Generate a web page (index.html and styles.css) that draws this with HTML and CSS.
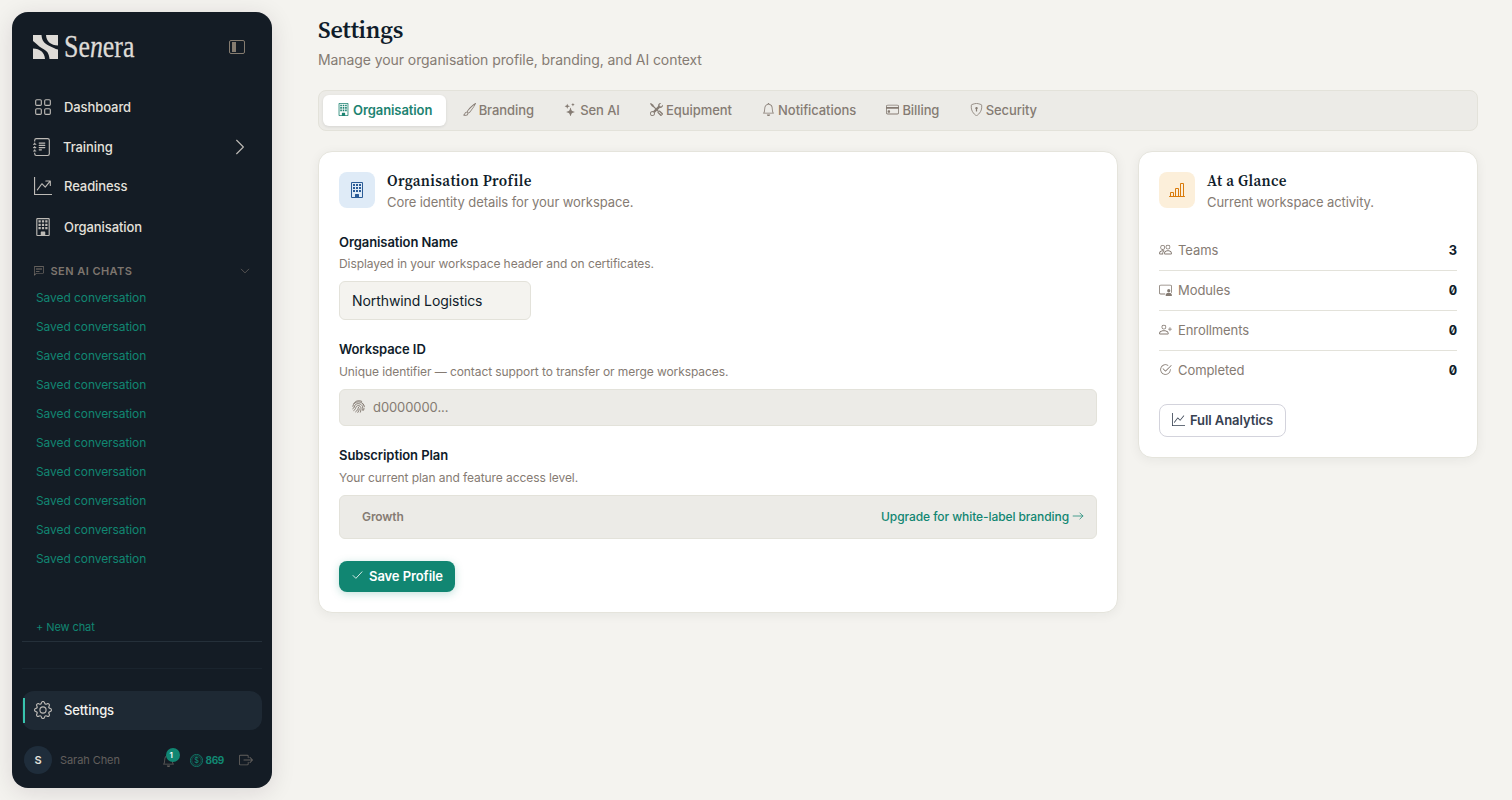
FILE: index.html
```html
<!DOCTYPE html>
<html lang="en">
  <head>
    <meta charset="UTF-8" />
    <meta name="viewport" content="width=device-width, initial-scale=1" />
    <title>Settings - Senera</title>
    <link rel="stylesheet" href="styles.css">
  </head>
  <body>
    <!-- Icon sprite -->
    <svg class="sprite" aria-hidden="true">
      <symbol id="i-building" viewBox="0 0 16 16">
        <path d="M4 2h2v2H4zM7 2h2v2H7zM10 2h2v2h-2zM4 5h2v2H4zM7 5h2v2H7zM10 5h2v2h-2zM4 8h2v2H4zM7 8h2v2H7zM10 8h2v2h-2z" />
        <path d="M2 1a1 1 0 0 1 1-1h10a1 1 0 0 1 1 1v14a1 1 0 0 1-1 1H3a1 1 0 0 1-1-1zm11 0H3v14h3v-2.5a.5.5 0 0 1 .5-.5h3a.5.5 0 0 1 .5.5V15h3z" />
      </symbol>
      <symbol id="i-grid" viewBox="0 0 16 16">
        <g fill="none" stroke="currentColor"><rect x="1.5" y="1.5" width="5" height="5" rx="1" /><rect x="9.5" y="1.5" width="5" height="5" rx="1" /><rect x="1.5" y="9.5" width="5" height="5" rx="1" /><rect x="9.5" y="9.5" width="5" height="5" rx="1" /></g>
      </symbol>
      <symbol id="i-journal" viewBox="0 0 16 16">
        <path d="M5 10.5a.5.5 0 0 1 .5-.5h2a.5.5 0 0 1 0 1h-2a.5.5 0 0 1-.5-.5m0-2a.5.5 0 0 1 .5-.5h5a.5.5 0 0 1 0 1h-5a.5.5 0 0 1-.5-.5m0-2a.5.5 0 0 1 .5-.5h5a.5.5 0 0 1 0 1h-5a.5.5 0 0 1-.5-.5m0-2a.5.5 0 0 1 .5-.5h5a.5.5 0 0 1 0 1h-5a.5.5 0 0 1-.5-.5" />
        <path d="M3 0h10a2 2 0 0 1 2 2v12a2 2 0 0 1-2 2H3a2 2 0 0 1-2-2v-1h1v1a1 1 0 0 0 1 1h10a1 1 0 0 0 1-1V2a1 1 0 0 0-1-1H3a1 1 0 0 0-1 1v1H1V2a2 2 0 0 1 2-2" />
        <path d="M1 5v-.5a.5.5 0 0 1 1 0V5h.5a.5.5 0 0 1 0 1h-2a.5.5 0 0 1 0-1zm0 3v-.5a.5.5 0 0 1 1 0V8h.5a.5.5 0 0 1 0 1h-2a.5.5 0 0 1 0-1zm0 3v-.5a.5.5 0 0 1 1 0v.5h.5a.5.5 0 0 1 0 1h-2a.5.5 0 0 1 0-1z" />
      </symbol>
      <symbol id="i-trend" viewBox="0 0 16 16">
        <path d="M0 0h1v15h15v1H0zm10 3.5a.5.5 0 0 1 .5-.5h4a.5.5 0 0 1 .5.5v4a.5.5 0 0 1-1 0V4.9l-3.613 4.417a.5.5 0 0 1-.74.037L7.06 6.767l-3.656 5.027a.5.5 0 0 1-.808-.588l4-5.5a.5.5 0 0 1 .758-.06l2.609 2.61L13.445 4H10.5a.5.5 0 0 1-.5-.5" />
      </symbol>
      <symbol id="i-graph" viewBox="0 0 16 16">
        <path d="M0 0h1v15h15v1H0zm14.817 3.113a.5.5 0 0 1 .07.704l-4.5 5.5a.5.5 0 0 1-.74.037L7.06 6.767l-3.656 5.027a.5.5 0 0 1-.808-.588l4-5.5a.5.5 0 0 1 .758-.06l2.609 2.61 4.15-5.073a.5.5 0 0 1 .704-.07" />
      </symbol>
      <symbol id="i-chat" viewBox="0 0 16 16">
        <path d="M14 1a1 1 0 0 1 1 1v8a1 1 0 0 1-1 1H4.414A2 2 0 0 0 3 11.586l-2 2V2a1 1 0 0 1 1-1zM2 0a2 2 0 0 0-2 2v12.793a.5.5 0 0 0 .854.353l2.853-2.853A1 1 0 0 1 4.414 12H14a2 2 0 0 0 2-2V2a2 2 0 0 0-2-2z" />
        <path d="M3 3.5a.5.5 0 0 1 .5-.5h9a.5.5 0 0 1 0 1h-9a.5.5 0 0 1-.5-.5M3 6a.5.5 0 0 1 .5-.5h9a.5.5 0 0 1 0 1h-9A.5.5 0 0 1 3 6m0 2.5a.5.5 0 0 1 .5-.5h5a.5.5 0 0 1 0 1h-5a.5.5 0 0 1-.5-.5" />
      </symbol>
      <symbol id="i-right" viewBox="0 0 16 16">
        <path d="M5 2l6 6-6 6" fill="none" stroke="currentColor" stroke-linecap="round" stroke-linejoin="round" />
      </symbol>
      <symbol id="i-down" viewBox="0 0 16 16">
        <path d="M2 5l6 6 6-6" fill="none" stroke="currentColor" stroke-linecap="round" stroke-linejoin="round" />
      </symbol>
      <symbol id="i-gear" viewBox="0 0 16 16">
        <path d="M8 4.754a3.246 3.246 0 1 0 0 6.492 3.246 3.246 0 0 0 0-6.492M5.754 8a2.246 2.246 0 1 1 4.492 0 2.246 2.246 0 0 1-4.492 0" />
        <path d="M9.796 1.343c-.527-1.79-3.065-1.79-3.592 0l-.094.319a.873.873 0 0 1-1.255.52l-.292-.16c-1.64-.892-3.433.902-2.54 2.541l.159.292a.873.873 0 0 1-.52 1.255l-.319.094c-1.79.527-1.79 3.065 0 3.592l.319.094a.873.873 0 0 1 .52 1.255l-.16.292c-.892 1.64.901 3.434 2.541 2.54l.292-.159a.873.873 0 0 1 1.255.52l.094.319c.527 1.79 3.065 1.79 3.592 0l.094-.319a.873.873 0 0 1 1.255-.52l.292.16c1.64.893 3.434-.902 2.54-2.541l-.159-.292a.873.873 0 0 1 .52-1.255l.319-.094c1.79-.527 1.79-3.065 0-3.592l-.319-.094a.873.873 0 0 1-.52-1.255l.16-.292c.893-1.64-.902-3.433-2.541-2.54l-.292.159a.873.873 0 0 1-1.255-.52zm-2.633.283c.246-.835 1.428-.835 1.674 0l.094.319a1.873 1.873 0 0 0 2.693 1.115l.291-.16c.764-.415 1.6.42 1.184 1.185l-.159.292a1.873 1.873 0 0 0 1.116 2.692l.318.094c.835.246.835 1.428 0 1.674l-.319.094a1.873 1.873 0 0 0-1.115 2.693l.16.291c.415.764-.42 1.6-1.185 1.184l-.291-.159a1.873 1.873 0 0 0-2.693 1.116l-.094.318c-.246.835-1.428.835-1.674 0l-.094-.319a1.873 1.873 0 0 0-2.692-1.115l-.292.16c-.764.415-1.6-.42-1.184-1.185l.159-.291A1.873 1.873 0 0 0 1.945 8.93l-.319-.094c-.835-.246-.835-1.428 0-1.674l.319-.094A1.873 1.873 0 0 0 3.06 4.377l-.16-.292c-.415-.764.42-1.6 1.185-1.184l.292.159a1.873 1.873 0 0 0 2.692-1.115z" />
      </symbol>
      <symbol id="i-bell" viewBox="0 0 16 16">
        <path d="M8 16a2 2 0 0 0 2-2H6a2 2 0 0 0 2 2M8 1.918l-.797.161A4 4 0 0 0 4 6c0 .628-.134 2.197-.459 3.742-.16.767-.376 1.566-.663 2.258h10.244c-.287-.692-.502-1.49-.663-2.258C12.134 8.197 12 6.628 12 6a4 4 0 0 0-3.203-3.92zM14.22 12c.223.447.481.801.78 1H1c.299-.199.557-.553.78-1C2.68 10.2 3 6.88 3 6c0-2.42 1.72-4.44 4.005-4.901a1 1 0 1 1 1.99 0A5 5 0 0 1 13 6c0 .88.32 4.2 1.22 6" />
      </symbol>
      <symbol id="i-coin" viewBox="0 0 16 16">
        <circle cx="8" cy="8" r="7.5" fill="none" stroke="currentColor" />
        <circle cx="8" cy="8" r="5.8" fill="none" stroke="currentColor" stroke-width=".6" />
        <text x="8" y="11.3" text-anchor="middle" font-size="9" font-weight="500">$</text>
      </symbol>
      <symbol id="i-logout" viewBox="0 0 16 16">
        <path d="M10 12.5a.5.5 0 0 1-.5.5h-8a.5.5 0 0 1-.5-.5v-9a.5.5 0 0 1 .5-.5h8a.5.5 0 0 1 .5.5v2a.5.5 0 0 0 1 0v-2A1.5 1.5 0 0 0 9.5 2h-8A1.5 1.5 0 0 0 0 3.5v9A1.5 1.5 0 0 0 1.5 14h8a1.5 1.5 0 0 0 1.5-1.5v-2a.5.5 0 0 0-1 0z" />
        <path d="M15.854 8.354a.5.5 0 0 0 0-.708l-3-3a.5.5 0 0 0-.708.708L14.293 7.5H5.5a.5.5 0 0 0 0 1h8.793l-2.147 2.146a.5.5 0 0 0 .708.708z" />
      </symbol>
      <symbol id="i-brush" viewBox="0 0 16 16">
        <path d="M15.825.12a.5.5 0 0 1 .132.584c-1.53 3.43-4.743 8.17-7.095 10.64a6.1 6.1 0 0 1-2.373 1.534c-.018.227-.06.538-.16.868-.201.659-.667 1.479-1.708 1.74a8.1 8.1 0 0 1-3.078.132 4 4 0 0 1-.562-.135 1.4 1.4 0 0 1-.466-.247.7.7 0 0 1-.204-.288.62.62 0 0 1 .004-.443c.095-.245.316-.38.461-.452.394-.197.625-.453.867-.826.095-.144.184-.297.287-.472l.117-.198c.151-.255.326-.54.546-.848.528-.739 1.201-.925 1.746-.896q.19.012.348.048c.062-.172.142-.38.238-.608.261-.619.658-1.419 1.187-2.069 2.176-2.67 6.18-6.206 9.117-8.104a.5.5 0 0 1 .596.04M4.705 11.912a1.2 1.2 0 0 0-.419-.1c-.246-.013-.573.05-.879.479-.197.275-.355.532-.5.777l-.105.177c-.106.181-.213.362-.32.528a3.4 3.4 0 0 1-.76.861c.69.112 1.736.111 2.657-.12.559-.139.843-.569.993-1.06a3 3 0 0 0 .126-.75zm1.44.026c.12-.04.277-.1.458-.183a5.1 5.1 0 0 0 1.535-1.1c1.9-1.996 4.412-5.57 6.052-8.631-2.59 1.927-5.566 4.66-7.302 6.792-.442.543-.795 1.243-1.042 1.826-.121.288-.214.54-.275.72v.001l.575.575z" />
      </symbol>
      <symbol id="i-stars" viewBox="0 0 16 16">
        <path d="M7.657 6.247c.11-.33.576-.33.686 0l.645 1.937a2.89 2.89 0 0 0 1.829 1.828l1.936.645c.33.11.33.576 0 .686l-1.937.645a2.89 2.89 0 0 0-1.828 1.829l-.645 1.936a.361.361 0 0 1-.686 0l-.645-1.937a2.89 2.89 0 0 0-1.828-1.828l-1.937-.645a.361.361 0 0 1 0-.686l1.937-.645a2.89 2.89 0 0 0 1.828-1.828zM3.794 1.148a.217.217 0 0 1 .412 0l.387 1.162c.173.518.579.924 1.097 1.097l1.162.387a.217.217 0 0 1 0 .412l-1.162.387A1.73 1.73 0 0 0 4.593 5.69l-.387 1.162a.217.217 0 0 1-.412 0L3.407 5.69A1.73 1.73 0 0 0 2.31 4.593l-1.162-.387a.217.217 0 0 1 0-.412l1.162-.387A1.73 1.73 0 0 0 3.407 2.31zM10.863.099a.145.145 0 0 1 .274 0l.258.774c.115.346.386.617.732.732l.774.258a.145.145 0 0 1 0 .274l-.774.258a1.16 1.16 0 0 0-.732.732l-.258.774a.145.145 0 0 1-.274 0l-.258-.774a1.16 1.16 0 0 0-.732-.732L9.1 2.137a.145.145 0 0 1 0-.274l.774-.258c.346-.115.617-.386.732-.732z" />
      </symbol>
      <symbol id="i-tools" viewBox="0 0 16 16">
        <path d="M1 0 0 1l2.2 3.081a1 1 0 0 0 .815.419h.07a1 1 0 0 1 .708.293l2.675 2.675-2.617 2.654A3.003 3.003 0 0 0 0 13a3 3 0 1 0 5.878-.851l2.654-2.617.968.968-.305.914a1 1 0 0 0 .242 1.023l3.27 3.27a.997.997 0 0 0 1.414 0l1.586-1.586a.997.997 0 0 0 0-1.414l-3.27-3.27a1 1 0 0 0-1.023-.242L10.5 9.5l-.96-.96 2.68-2.643A3.005 3.005 0 0 0 16 3q0-.405-.102-.777l-2.14 2.141L12 4l-.364-1.757L13.777.102a3 3 0 0 0-3.675 3.68L7.462 6.46 4.793 3.793a1 1 0 0 1-.293-.707v-.071a1 1 0 0 0-.419-.814zm9.646 10.646a.5.5 0 0 1 .708 0l2.914 2.915a.5.5 0 0 1-.707.707l-2.915-2.914a.5.5 0 0 1 0-.708M3 11l.471.242.529.026.287.445.445.287.026.529L5 13l-.242.471-.026.529-.445.287-.287.445-.529.026L3 15l-.471-.242L2 14.732l-.287-.445L1.268 14l-.026-.529L1 13l.242-.471.026-.529.445-.287.287-.445.529-.026z" />
      </symbol>
      <symbol id="i-card" viewBox="0 0 16 16">
        <path d="M0 4a2 2 0 0 1 2-2h12a2 2 0 0 1 2 2v8a2 2 0 0 1-2 2H2a2 2 0 0 1-2-2zm2-1a1 1 0 0 0-1 1v1h14V4a1 1 0 0 0-1-1zm13 4H1v5a1 1 0 0 0 1 1h12a1 1 0 0 0 1-1z" />
        <path d="M2 10a1 1 0 0 1 1-1h1a1 1 0 0 1 1 1v1a1 1 0 0 1-1 1H3a1 1 0 0 1-1-1z" />
      </symbol>
      <symbol id="i-shield" viewBox="0 0 16 16">
        <path d="M8 .5c-1.5 0-4.1.9-5.6 1.4a1 1 0 0 0-.75.9c-.6 4.6 1 7.6 2.6 9.6C5.5 14 7.2 15.5 8 15.5s2.5-1.5 3.75-3.1c1.6-2 3.2-5 2.6-9.6a1 1 0 0 0-.75-.9C12.1 1.4 9.5.5 8 .5z" fill="none" stroke="currentColor" />
        <path d="M9.5 6.5a1.5 1.5 0 0 1-1 1.415l.385 1.99a.5.5 0 0 1-.491.595h-.788a.5.5 0 0 1-.49-.595l.384-1.99a1.5 1.5 0 1 1 2-1.415" />
      </symbol>
      <symbol id="i-bars" viewBox="0 0 16 16">
        <path d="M11 2a1 1 0 0 1 1-1h2a1 1 0 0 1 1 1v12h.5a.5.5 0 0 1 0 1H.5a.5.5 0 0 1 0-1H1v-3a1 1 0 0 1 1-1h2a1 1 0 0 1 1 1v3h1V7a1 1 0 0 1 1-1h2a1 1 0 0 1 1 1v7h1zm1 12h2V2h-2zm-3 0V7H7v7zm-5 0v-3H2v3z" />
      </symbol>
      <symbol id="i-people" viewBox="0 0 16 16">
        <path d="M15 14s1 0 1-1-1-4-5-4-5 3-5 4 1 1 1 1zm-7.978-1L7 12.996c.001-.264.167-1.03.76-1.72C8.312 10.629 9.282 10 11 10c1.717 0 2.687.63 3.24 1.276.593.69.758 1.457.76 1.72l-.008.002-.014.002zM11 7a2 2 0 1 0 0-4 2 2 0 0 0 0 4m3-2a3 3 0 1 1-6 0 3 3 0 0 1 6 0M6.936 9.28a6 6 0 0 0-1.23-.247A7 7 0 0 0 5 9c-4 0-5 3-5 4q0 1 1 1h4.216A2.24 2.24 0 0 1 5 13c0-1.01.377-2.042 1.09-2.904.243-.294.526-.569.846-.816M4.92 10A5.5 5.5 0 0 0 4 13H1c0-.26.164-1.03.76-1.724.545-.636 1.492-1.256 3.16-1.275ZM1.5 5.5a3 3 0 1 1 6 0 3 3 0 0 1-6 0m3-2a2 2 0 1 0 0 4 2 2 0 0 0 0-4" />
      </symbol>
      <symbol id="i-video" viewBox="0 0 16 16">
        <path d="M14 9.5a2 2 0 1 1-4 0 2 2 0 0 1 4 0m-6 5.7c0 .8.8.8.8.8h6.4s.8 0 .8-.8-.8-3.2-4-3.2-4 2.4-4 3.2" />
        <path d="M2 2a2 2 0 0 0-2 2v8a2 2 0 0 0 2 2h5.243c.122-.326.295-.668.526-1H2a1 1 0 0 1-1-1V4a1 1 0 0 1 1-1h12a1 1 0 0 1 1 1v7.81c.353.23.656.496.91.783Q16 12.312 16 12V4a2 2 0 0 0-2-2z" />
      </symbol>
      <symbol id="i-plus" viewBox="0 0 16 16">
        <path d="M6 8a3 3 0 1 0 0-6 3 3 0 0 0 0 6m2-3a2 2 0 1 1-4 0 2 2 0 0 1 4 0m4 8c0 1-1 1-1 1H1s-1 0-1-1 1-4 6-4 6 3 6 4m-1-.004c-.001-.246-.154-.986-.832-1.664C9.516 10.68 8.289 10 6 10s-3.516.68-4.168 1.332c-.678.678-.83 1.418-.832 1.664z" />
        <path d="M13.5 5a.5.5 0 0 1 .5.5V7h1.5a.5.5 0 0 1 0 1H14v1.5a.5.5 0 0 1-1 0V8h-1.5a.5.5 0 0 1 0-1H13V5.5a.5.5 0 0 1 .5-.5" />
      </symbol>
      <symbol id="i-done" viewBox="0 0 16 16">
        <path d="M2.5 8a5.5 5.5 0 0 1 8.25-4.764.5.5 0 0 0 .5-.866A6.5 6.5 0 1 0 14.5 8a.5.5 0 0 0-1 0 5.5 5.5 0 1 1-11 0" />
        <path d="M15.354 3.354a.5.5 0 0 0-.708-.708L8 9.293 5.354 6.646a.5.5 0 1 0-.708.708l3 3a.5.5 0 0 0 .708 0z" />
      </symbol>
      <symbol id="i-check" viewBox="0 0 16 16">
        <path d="M2.5 8L6 11.5l7.500-8" fill="none" stroke="currentColor" stroke-linecap="round" stroke-linejoin="round" />
      </symbol>
      <symbol id="i-arrow" viewBox="0 0 16 16">
        <path d="M1.5 8h13M10.5 4l4 4-4 4" fill="none" stroke="currentColor" stroke-linecap="round" stroke-linejoin="round" />
      </symbol>
      <symbol id="i-finger" viewBox="0 0 16 16">
        <g fill="none" stroke="currentColor" stroke-width="1.2" stroke-linecap="round">
          <path d="M2.2 4.2C4.5.8 8.5-.1 12 1.7M1 7.8C1.2 4.5 4.5 2 8.5 2.3c3.5.3 6 2.5 6.7 6" />
          <path d="M1 10.8c2.5-1 1.5-3.3 3-4.9 2.5-2.5 7.5-1.6 8.9 2 .5 1.3.6 3 .3 4.700M2.2 13C5 11.5 4 9.5 5.5 7.8c1.7-1.7 4.5-1 5.3 1.2.5 1.7.3 4-.5 6M4.5 14.6C7 13 7.2 11 8 9M7.2 15.3C8.2 14 8.7 12.5 9 11M13 4.2l1.5 2M14.8 10.5l-.5 2" />
        </g>
      </symbol>
    </svg>

    <div class="app">
      <aside class="sidebar">
        <div class="brand">
          <div class="logo">
            <svg width="25" height="24" viewBox="0 3 25 24">
              <path d="M0 3h8.5C9 9 11 11 16 13.700c4 2 6 3 9 3.800V27h-8.500C16 21 14 18.700 9 16.200 5 14 3 11 0 9z" />
              <path d="M13 3h12v10.5C18 13 13.5 10 13 3zM0 16.5C7 17 11.500 20 12 27H0z" />
            </svg>
            <span class="wordmark">Se<i>n</i>era</span>
          </div>
          <button class="collapse" aria-label="Collapse sidebar"><span></span></button>
        </div>

        <nav class="nav">
          <a class="nav-item"><svg class="icon"><use href="#i-grid" /></svg>Dashboard</a>
          <a class="nav-item training"><svg class="icon"><use href="#i-journal" /></svg>Training<svg class="icon end"><use href="#i-right" /></svg></a>
          <a class="nav-item readiness"><svg class="icon"><use href="#i-trend" /></svg>Readiness</a>
          <a class="nav-item"><svg class="icon"><use href="#i-building" /></svg>Organisation</a>
        </nav>

        <div class="chats">
          <div class="chats-head">
            <svg class="icon"><use href="#i-chat" /></svg>SEN AI CHATS
            <svg class="icon end"><use href="#i-down" /></svg>
          </div>
          <a class="chat">Saved conversation</a>
          <a class="chat">Saved conversation</a>
          <a class="chat">Saved conversation</a>
          <a class="chat">Saved conversation</a>
          <a class="chat">Saved conversation</a>
          <a class="chat">Saved conversation</a>
          <a class="chat">Saved conversation</a>
          <a class="chat">Saved conversation</a>
          <a class="chat">Saved conversation</a>
          <a class="chat">Saved conversation</a>
        </div>
        <a class="new-chat">+ New chat</a>

        <div class="side-bottom">
          <a class="nav-item active"><svg class="icon"><use href="#i-gear" /></svg>Settings</a>
          <div class="user">
            <span class="avatar">S</span>
            <span class="user-name">Sarah Chen</span>
            <span class="bell"><svg class="icon"><use href="#i-bell" /></svg><span class="badge">1</span></span>
            <span class="credits"><svg class="icon"><use href="#i-coin" /></svg>869</span>
            <svg class="icon logout"><use href="#i-logout" /></svg>
          </div>
        </div>
      </aside>

      <main class="main">
        <h1>Settings</h1>
        <p class="subtitle">Manage your organisation profile, branding, and AI context</p>

        <div class="tabs">
          <a class="tab selected"><svg class="icon"><use href="#i-building" /></svg>Organisation</a>
          <a class="tab"><svg class="icon"><use href="#i-brush" /></svg>Branding</a>
          <a class="tab"><svg class="icon"><use href="#i-stars" /></svg>Sen AI</a>
          <a class="tab"><svg class="icon"><use href="#i-tools" /></svg>Equipment</a>
          <a class="tab"><svg class="icon"><use href="#i-bell" /></svg>Notifications</a>
          <a class="tab"><svg class="icon"><use href="#i-card" /></svg>Billing</a>
          <a class="tab"><svg class="icon"><use href="#i-shield" /></svg>Security</a>
        </div>

        <div class="columns">
          <section class="card">
            <div class="card-head">
              <span class="card-icon blue"><svg class="icon"><use href="#i-building" /></svg></span>
              <div>
                <h2>Organisation Profile</h2>
                <p>Core identity details for your workspace.</p>
              </div>
            </div>

            <div class="field">
              <label for="orgName">Organisation Name</label>
              <p class="hint">Displayed in your workspace header and on certificates.</p>
              <input type="text" id="orgName" value="Northwind Logistics" />
            </div>

            <div class="field">
              <label>Workspace ID</label>
              <p class="hint">Unique identifier — contact support to transfer or merge workspaces.</p>
              <div class="readonly"><svg class="icon"><use href="#i-finger" /></svg>d0000000...</div>
            </div>

            <div class="field">
              <label>Subscription Plan</label>
              <p class="hint">Your current plan and feature access level.</p>
              <div class="readonly plan">
                <span class="plan-name">Growth</span>
                <a class="upgrade">Upgrade for white-label branding <svg class="icon"><use href="#i-arrow" /></svg></a>
              </div>
            </div>

            <button class="save"><svg class="icon"><use href="#i-check" /></svg>Save Profile</button>
          </section>

          <section class="card glance">
            <div class="card-head">
              <span class="card-icon amber"><svg class="icon"><use href="#i-bars" /></svg></span>
              <div>
                <h2>At a Glance</h2>
                <p>Current workspace activity.</p>
              </div>
            </div>
            <div class="stat"><svg class="icon"><use href="#i-people" /></svg>Teams<strong>3</strong></div>
            <div class="stat"><svg class="icon"><use href="#i-video" /></svg>Modules<strong>0</strong></div>
            <div class="stat"><svg class="icon"><use href="#i-plus" /></svg>Enrollments<strong>0</strong></div>
            <div class="stat"><svg class="icon"><use href="#i-done" /></svg>Completed<strong>0</strong></div>
            <button class="analytics"><svg class="icon"><use href="#i-graph" /></svg>Full Analytics</button>
          </section>
        </div>
      </main>
    </div>
  </body>
</html>
```
FILE: styles.css
```css
* {
  box-sizing: border-box;
}
body {
  margin: 0;
  font-family: Inter, "Liberation Sans", sans-serif;
  font-size: 14px;
  letter-spacing: -0.08px;
  color: #0f1c2a;
  background: #f4f3ef;
}
h1,
h2,
p {
  margin: 0;
}
button,
input {
  font-family: inherit;
  letter-spacing: inherit;
}
.sprite {
  display: none;
}
.icon {
  width: 13px;
  height: 13px;
  fill: currentColor;
  flex-shrink: 0;
}
.app {
  display: flex;
  height: 800px;
  padding: 12px;
}

/* Sidebar */
.sidebar {
  display: flex;
  flex-direction: column;
  width: 260px;
  padding: 0 10px 8px;
  border-radius: 16px;
  background: #141c25;
  color: #e4e1dc;
  box-shadow: 0 4px 24px rgba(40, 20, 40, 0.12);
}
.brand {
  display: flex;
  align-items: center;
  justify-content: space-between;
  height: 70px;
  padding: 0 17px 0 11px;
}
.logo {
  display: flex;
  align-items: center;
  gap: 6px;
  fill: #dedbd7;
}
.wordmark {
  width: 72px;
  font-family: "Liberation Serif", serif;
  font-size: 31px;
  line-height: 36px;
  letter-spacing: 0;
  color: #dedbd7;
  -webkit-text-stroke: 0.3px #dedbd7;
  transform: scaleX(0.835);
  transform-origin: left;
}
.collapse {
  width: 16px;
  height: 14px;
  padding: 1px 2px;
  border: 1px solid #857c70;
  border-radius: 2px;
  background: none;
}
.collapse span {
  display: block;
  width: 4px;
  height: 10px;
  background: #857c70;
}
.nav {
  display: flex;
  flex-direction: column;
  gap: 1px;
  padding-top: 5px;
}
.nav-item {
  display: flex;
  align-items: center;
  gap: 12px;
  height: 39px;
  padding: 0 12px;
  border-radius: 12px;
  font-size: 13px;
  font-weight: 500;
}
.nav-item .icon {
  width: 18px;
  height: 18px;
  color: #bdbab6;
}
.nav-item.training {
  padding-left: 11px;
}
.nav-item.readiness,
.nav-item.active {
  padding-bottom: 2px;
}
.end {
  margin-left: auto;
}
.nav-item .end {
  margin-right: 1px;
}
.chats-head {
  display: flex;
  align-items: center;
  height: 35px;
  padding: 0 12px;
  margin-top: 7px;
  font-size: 11px;
  font-weight: 600;
  letter-spacing: 0.45px;
  color: #7d756e;
}
.chats-head .icon {
  width: 10px;
  height: 10px;
  margin-right: 6.5px;
}
.chats-head .end {
  margin-right: 0;
}
.chat {
  display: block;
  height: 29px;
  padding-left: 14px;
  font-size: 12px;
  line-height: 20px;
  color: #118672;
}
.new-chat {
  margin-top: 40px;
  padding-left: 14px;
  height: 24px;
  border-bottom: 1px solid #25303a;
  font-size: 11px;
  line-height: 19px;
  color: #118672;
}
.side-bottom {
  margin-top: auto;
  padding-top: 22px;
  border-top: 1px solid #1a242e;
}
.nav-item.active {
  position: relative;
  background: #1e2934;
  color: #f4f3ef;
}
.nav-item.active::before {
  content: "";
  position: absolute;
  left: 1px;
  top: 7px;
  width: 2px;
  height: 25px;
  background: #38c4ae;
}
.user {
  display: flex;
  align-items: center;
  height: 40px;
  margin-top: 10px;
  padding: 0 9px 0 2px;
  font-size: 11px;
}
.avatar {
  width: 28px;
  height: 28px;
  border-radius: 50%;
  background: #1f2d3b;
  font-weight: 600;
  line-height: 28px;
  text-align: center;
}
.user-name {
  margin-left: 8px;
  color: #625f5d;
}
.bell {
  position: relative;
  display: flex;
  margin-left: auto;
  color: #625f5d;
}
.badge {
  position: absolute;
  left: 4px;
  top: -6px;
  width: 14px;
  height: 14px;
  padding-right: 3px;
  border-radius: 50%;
  background: #118672;
  color: #fff;
  font-size: 8px;
  font-weight: 600;
  line-height: 14px;
  text-align: center;
}
.credits {
  display: flex;
  align-items: center;
  gap: 3px;
  margin-left: 15px;
  font-size: 10px;
  font-weight: 700;
  letter-spacing: -0.35px;
  color: #118672;
}
.logout {
  width: 14px;
  height: 14px;
  margin-left: 15px;
  color: #625f5d;
}

/* Main area */
.main {
  flex: 1;
  padding: 0 22px 0 46px;
}
h1,
h2 {
  font-family: "Source Serif 4", "Liberation Serif", serif;
  font-weight: 600;
}
h1 {
  font-size: 24px;
  line-height: 36px;
  letter-spacing: -0.2px;
}
.subtitle {
  margin-top: 1px;
  font-size: 14px;
  line-height: 21px;
  color: #857b73;
}
.tabs {
  display: flex;
  gap: 2.3px;
  height: 41px;
  margin: 20px 0;
  padding: 4px;
  border: 1px solid #e3e2da;
  border-radius: 8px;
  background: #ecebe7;
}
.tab {
  display: flex;
  align-items: center;
  gap: 3px;
  padding: 0 14px 2px;
  border-radius: 6px;
  font-size: 13px;
  font-weight: 500;
  color: #857b73;
}
.tab.selected {
  background: #fff;
  color: #1c8371;
  font-weight: 600;
  box-shadow: 0 1px 3px rgba(15, 28, 42, 0.1);
}
.columns {
  display: grid;
  grid-template-columns: 800px 340px;
  gap: 20px;
  align-items: start;
}
.card {
  padding: 20px;
  border: 1px solid #e5e4dc;
  border-radius: 14px;
  background: #fff;
  box-shadow: 0 2px 12px rgba(15, 28, 42, 0.06);
}
.card-head {
  display: flex;
  gap: 12px;
  height: 42px;
}
.card-icon {
  display: grid;
  place-items: center;
  width: 36px;
  height: 36px;
  border-radius: 8px;
}
.card-icon .icon {
  width: 16px;
  height: 16px;
}
.blue {
  background: #dfebf7;
  color: #2b5c97;
}
.amber {
  background: #fcefda;
  color: #d97b0c;
}
h2 {
  font-size: 15px;
  line-height: 18px;
  letter-spacing: 0.35px;
}
.card-head p {
  margin-top: 2px;
  font-size: 13px;
  line-height: 20px;
  color: #857b73;
}
.field {
  margin-top: 18px;
}
.field + .field {
  margin-top: 19px;
}
label {
  display: block;
  font-size: 13px;
  font-weight: 600;
  line-height: 20px;
}
.hint {
  margin: 3px 0 8px;
  font-size: 12px;
  line-height: 18px;
  color: #857b73;
}
.field + .field .hint {
  margin-top: 4px;
}
input {
  display: block;
  width: 192px;
  height: 39px;
  padding: 0 12px;
  border: 1px solid #e3e2da;
  border-radius: 6px;
  background: #f4f3ef;
  color: #0f1c2a;
  font-size: 14px;
}
.readonly {
  display: flex;
  align-items: center;
  gap: 8px;
  height: 37px;
  padding: 0 12px 2px;
  border: 1px solid #e3e2da;
  border-radius: 6px;
  background: #ecebe7;
  font-size: 13px;
  color: #857b73;
}
.plan {
  justify-content: space-between;
  height: 44px;
  font-size: 12px;
}
.plan-name {
  padding-left: 10px;
  font-weight: 600;
}
.upgrade {
  display: flex;
  align-items: center;
  gap: 3px;
  font-weight: 500;
  color: #118672;
}
.upgrade .icon {
  width: 12px;
  height: 12px;
}
.save,
.analytics {
  display: flex;
  align-items: center;
  font-size: 13px;
  font-weight: 600;
}
.save {
  gap: 5px;
  height: 31px;
  margin-top: 22px;
  padding: 0 12px 2px;
  border: 0;
  border-radius: 8px;
  background: #118672;
  color: #fff;
  box-shadow: 0 2px 8px rgba(17, 134, 114, 0.25);
}
.glance .card-head {
  margin-bottom: 17px;
}
.stat {
  display: flex;
  align-items: center;
  gap: 6px;
  height: 40px;
  padding-bottom: 1px;
  border-bottom: 1px solid #e3e2da;
  color: #857b73;
  font-size: 13px;
}
.stat .icon {
  margin-bottom: 1px;
}
.stat:nth-of-type(5) {
  padding-bottom: 2px;
  border-bottom: 0;
}
.stat strong {
  margin-left: auto;
  color: #0f1c2a;
  font-weight: 700;
  font-variant-numeric: tabular-nums slashed-zero;
}
.analytics {
  gap: 5px;
  height: 33px;
  margin-top: 13px;
  padding: 0 12px 2px;
  border: 1px solid #d3d3dc;
  border-radius: 8px;
  background: #fff;
  color: #374151;
}
```
